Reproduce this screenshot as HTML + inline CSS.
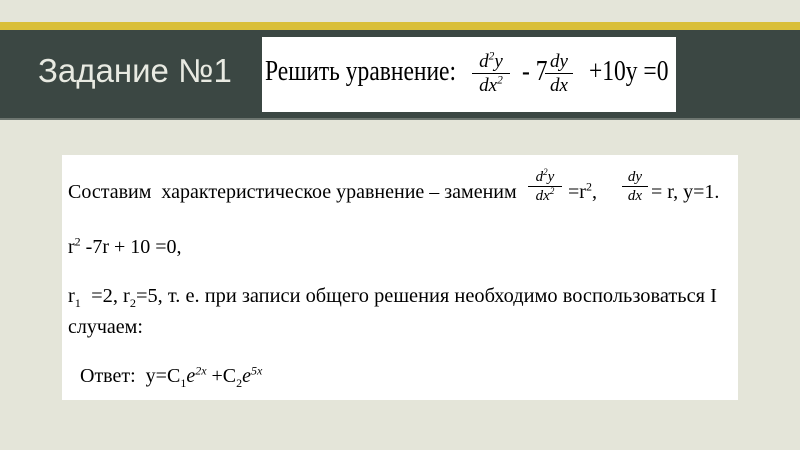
<!DOCTYPE html>
<html><head><meta charset="utf-8"><style>
body{margin:0;width:800px;height:450px;background:#e4e5d9;position:relative;overflow:hidden;font-family:"Liberation Serif",serif;}
.a{position:absolute;white-space:nowrap;}
.fr{position:absolute;text-align:center;font-style:italic;}
.fr span{display:block;}
.fr .n{border-bottom:1px solid #000;}
sup,sub{font-size:0.6em;line-height:0;}
.t{font-size:20px;line-height:20px;}
</style></head><body>
<div class="a" style="left:0;top:22px;width:800px;height:8px;background:#d9bf3a"></div>
<div class="a" style="left:0;top:30px;width:800px;height:89px;background:#3b4743"></div>
<div class="a" style="left:0;top:118px;width:800px;height:2px;background:#6d7670"></div>
<div class="a" style="left:38px;top:52px;font-family:'Liberation Sans',sans-serif;font-size:33px;color:#e8eae2;">Задание №1</div>
<div class="a" style="left:262px;top:37px;width:414px;height:75px;background:#fff"></div>
<div class="a" style="left:265px;top:58px;font-size:28px;line-height:28px;transform:scaleX(0.84);transform-origin:left;">Решить уравнение:</div>
<div class="fr" style="left:472px;top:50px;width:38px;font-size:19px;line-height:23px;"><span class="n">d<sup>2</sup>y</span><span>dx<sup>2</sup></span></div>
<div class="a" style="left:522px;top:58px;font-size:28px;line-height:28px;transform:scaleX(0.84);transform-origin:left;">- 7</div>
<div class="fr" style="left:545px;top:50px;width:28px;font-size:19px;line-height:23px;"><span class="n">dy</span><span>dx</span></div>
<div class="a" style="left:589px;top:58px;font-size:28px;line-height:28px;transform:scaleX(0.84);transform-origin:left;">+10y =0</div>
<div class="a" style="left:62px;top:155px;width:676px;height:245px;background:#fff"></div>
<div class="a t" style="left:68px;top:182px;">Составим &nbsp;характеристическое уравнение – заменим</div>
<div class="fr" style="left:528px;top:168px;width:34px;font-size:15px;line-height:18px;"><span class="n">d<sup>2</sup>y</span><span>dx<sup>2</sup></span></div>
<div class="a t" style="left:568px;top:182px;">=r<sup>2</sup>,</div>
<div class="fr" style="left:622px;top:168px;width:26px;font-size:15px;line-height:18px;"><span class="n">dy</span><span>dx</span></div>
<div class="a t" style="left:651px;top:182px;">= r, y=1.</div>
<div class="a t" style="left:68px;top:237px;">r<sup>2</sup> -7r + 10 =0,</div>
<div class="a t" style="left:68px;top:286px;transform:scaleX(1.02);transform-origin:left;">r<sub>1</sub> &nbsp;=2, r<sub>2</sub>=5, т. е. при записи общего решения необходимо воспользоваться I</div>
<div class="a t" style="left:68px;top:317px;">случаем:</div>
<div class="a t" style="left:80px;top:366px;">Ответ: &nbsp;y=C<sub>1</sub><i>e</i><sup><i>2x</i></sup> +C<sub>2</sub><i>e</i><sup><i>5x</i></sup></div>
</body></html>
